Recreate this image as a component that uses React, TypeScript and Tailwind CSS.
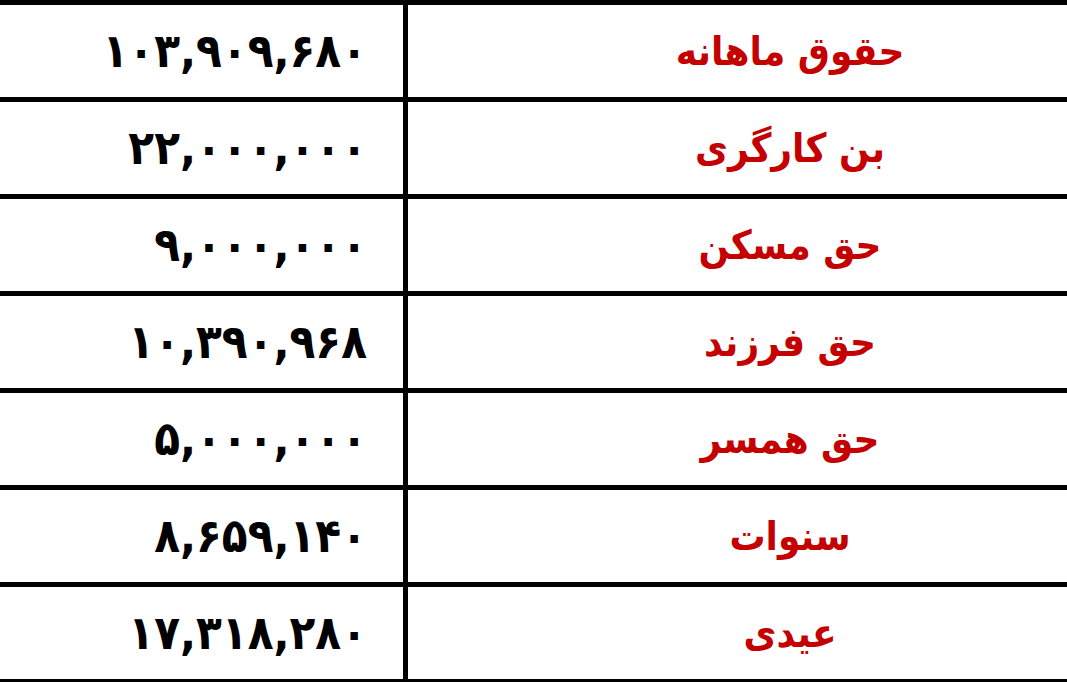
const rows: { label: string; amount: string }[] = [
  { label: 'حقوق ماهانه', amount: '۱۰۳,۹۰۹,۶۸۰' },
  { label: 'بن کارگری', amount: '۲۲,۰۰۰,۰۰۰' },
  { label: 'حق مسکن', amount: '۹,۰۰۰,۰۰۰' },
  { label: 'حق فرزند', amount: '۱۰,۳۹۰,۹۶۸' },
  { label: 'حق همسر', amount: '۵,۰۰۰,۰۰۰' },
  { label: 'سنوات', amount: '۸,۶۵۹,۱۴۰' },
  { label: 'عیدی', amount: '۱۷,۳۱۸,۲۸۰' },
];

export default function App() {
  return (
    <div className="h-[682px] w-[1067px] overflow-hidden bg-white">
      <div className="border-t-[5px] border-black">
        {rows.map((r) => (
          <div key={r.label} className="flex h-[97px] border-b-[5px] border-black">
            <div
              dir="ltr"
              className="flex w-[408px] shrink-0 items-center justify-end border-r-[5px] border-black pr-[36px] text-[47px] font-bold tracking-[-1px] text-black"
              style={{ fontFamily: '"DejaVu Sans Condensed", "DejaVu Sans", sans-serif' }}
            >
              {r.amount}
            </div>
            <div
              dir="rtl"
              className="flex flex-1 items-center justify-center pl-[105px] text-[40px] font-bold text-[#c40000]"
              style={{ fontFamily: '"DejaVu Sans Condensed", "DejaVu Sans", sans-serif' }}
            >
              {r.label}
            </div>
          </div>
        ))}
      </div>
    </div>
  );
}
